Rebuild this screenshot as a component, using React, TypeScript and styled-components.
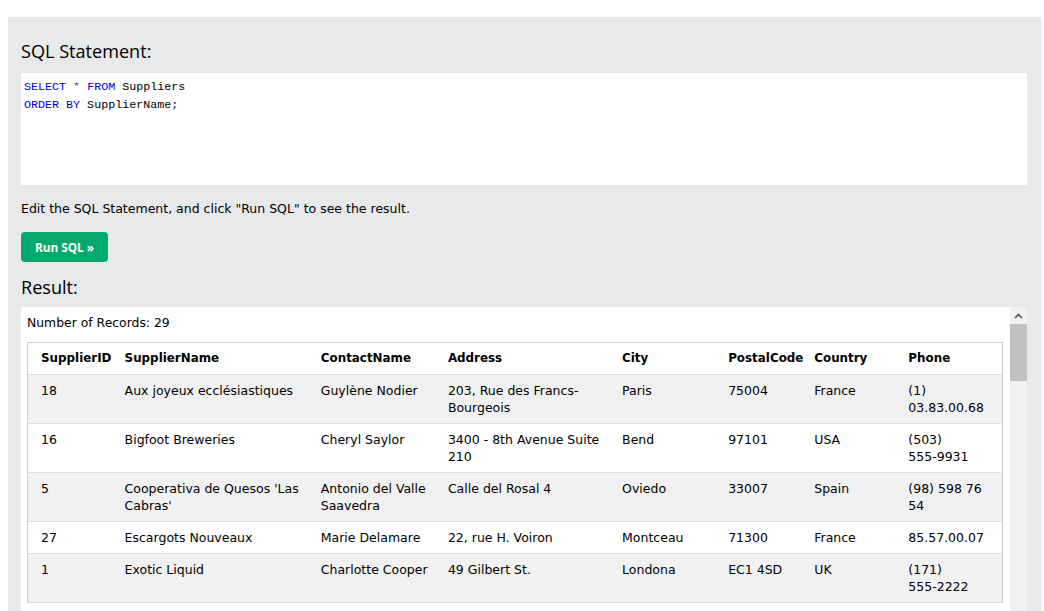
import styled, { createGlobalStyle } from "styled-components";

type Supplier = {
  id: string;
  name: string;
  contact: string;
  address: string;
  city: string;
  postal: string;
  country: string;
  phone: string;
};

const suppliers: Supplier[] = [
  { id: "18", name: "Aux joyeux ecclésiastiques", contact: "Guylène Nodier", address: "203, Rue des Francs-Bourgeois", city: "Paris", postal: "75004", country: "France", phone: "(1) 03.83.00.68" },
  { id: "16", name: "Bigfoot Breweries", contact: "Cheryl Saylor", address: "3400 - 8th Avenue Suite 210", city: "Bend", postal: "97101", country: "USA", phone: "(503) 555-9931" },
  { id: "5", name: "Cooperativa de Quesos 'Las Cabras'", contact: "Antonio del Valle Saavedra", address: "Calle del Rosal 4", city: "Oviedo", postal: "33007", country: "Spain", phone: "(98) 598 76 54" },
  { id: "27", name: "Escargots Nouveaux", contact: "Marie Delamare", address: "22, rue H. Voiron", city: "Montceau", postal: "71300", country: "France", phone: "85.57.00.07" },
  { id: "1", name: "Exotic Liquid", contact: "Charlotte Cooper", address: "49 Gilbert St.", city: "Londona", postal: "EC1 4SD", country: "UK", phone: "(171) 555-2222" },
];

const columns = [
  { title: "SupplierID", width: 91 },
  { title: "SupplierName", width: 196 },
  { title: "ContactName", width: 127 },
  { title: "Address", width: 174 },
  { title: "City", width: 106 },
  { title: "PostalCode", width: 86 },
  { title: "Country", width: 94 },
  { title: "Phone", width: 100 },
];

// phone numbers break only at spaces, never at the hyphen
function Phone({ value }: { value: string }) {
  const words = value.split(" ");
  return (
    <>
      {words.map((w, i) => (
        <span key={i}>
          <Word>{w}</Word>
          {i < words.length - 1 ? " " : ""}
        </span>
      ))}
    </>
  );
}

function App() {
  return (
    <>
      <GlobalStyle />
      <Panel>
        <Heading>SQL Statement:</Heading>
        <CodeBox>
          <CodeLine>
            <Keyword>SELECT</Keyword> <Operator>*</Operator> <Keyword>FROM</Keyword> Suppliers
          </CodeLine>
          <CodeLine>
            <Keyword>ORDER BY</Keyword> SupplierName;
          </CodeLine>
        </CodeBox>
        <Hint>Edit the SQL Statement, and click "Run SQL" to see the result.</Hint>
        <RunButton>Run SQL »</RunButton>
        <ResultHeading>Result:</ResultHeading>
        <ResultFrame>
          <ResultBody>
            <Count>Number of Records: 29</Count>
            <Table>
              <colgroup>
                {columns.map((c) => (
                  <Col key={c.title} $width={c.width} />
                ))}
              </colgroup>
              <thead>
                <Row>
                  {columns.map((c) => (
                    <Th key={c.title}>{c.title}</Th>
                  ))}
                </Row>
              </thead>
              <tbody>
                {suppliers.map((s) => (
                  <Row key={s.id}>
                    <Td>{s.id}</Td>
                    <Td>{s.name}</Td>
                    <Td>{s.contact}</Td>
                    <Td>{s.address}</Td>
                    <Td>{s.city}</Td>
                    <Td>{s.postal}</Td>
                    <Td>{s.country}</Td>
                    <Td>
                      <Phone value={s.phone} />
                    </Td>
                  </Row>
                ))}
              </tbody>
            </Table>
          </ResultBody>
          <Scrollbar>
            <ScrollArrow>
              <svg width="9" height="6" viewBox="0 0 9 6">
                <path d="M1 5 L4.5 1.5 L8 5" fill="none" stroke="#505050" strokeWidth="1.6" />
              </svg>
            </ScrollArrow>
            <ScrollThumb />
          </Scrollbar>
        </ResultFrame>
      </Panel>
    </>
  );
}

export default App;

const GlobalStyle = createGlobalStyle`
  html, body {
    margin: 0;
    padding: 0;
    background: #ffffff;
    height: 611px;
    overflow: hidden;
  }
  body {
    font-family: "DejaVu Sans", Verdana, sans-serif;
  }
`;

const Panel = styled.div`
  margin: 17px 3px 0 8px;
  padding: 20px 14px 0 13px;
  height: 594px;
  box-sizing: border-box;
  background-color: #e7e9eb;
  box-shadow: 1px 0 1px rgba(0, 0, 0, 0.06);
  display: flex;
  flex-direction: column;
  align-items: flex-start;
  overflow: hidden;
`;

const Heading = styled.h2`
  margin: 0 0 8px;
  font-family: "Open Sans", "Segoe UI", sans-serif;
  font-size: 18.1px;
  font-weight: 400;
  line-height: 28px;
  color: #000;
`;

const CodeBox = styled.div`
  align-self: stretch;
  height: 112px;
  box-sizing: border-box;
  padding: 5px 3px;
  background: #ffffff;
  font-family: "Liberation Mono", "DejaVu Sans Mono", monospace;
  font-size: 11.7px;
  line-height: 18px;
  color: #000;
`;

const CodeLine = styled.div`
  white-space: pre;
`;

const Keyword = styled.span`
  color: #0000cd;
`;

const Operator = styled.span`
  color: #555577;
`;

const Hint = styled.p`
  margin: 15px 0 0;
  font-size: 12.5px;
  line-height: 18px;
  color: #000;
`;

const RunButton = styled.button`
  margin-top: 14px;
  width: 87px;
  height: 30px;
  border: none;
  border-radius: 4px;
  background-color: #04aa6d;
  color: #ffffff;
  font-family: "Open Sans", "Segoe UI", sans-serif;
  font-size: 11.8px;
  font-weight: 700;
  padding: 0;
  cursor: pointer;
`;

const ResultHeading = styled.h2`
  margin: 11px 0 0;
  font-family: "Open Sans", "Segoe UI", sans-serif;
  font-size: 18.1px;
  font-weight: 400;
  line-height: 28px;
  color: #000;
`;

const ResultFrame = styled.div`
  margin-top: 6px;
  align-self: stretch;
  flex: 1;
  background: #ffffff;
  display: flex;
  overflow: hidden;
`;

const ResultBody = styled.div`
  flex: 1;
  padding: 7px 8px 0 6px;
  min-width: 0;
`;

const Count = styled.div`
  font-size: 12.4px;
  line-height: 18px;
  margin-bottom: 10px;
  color: #000;
`;

const Table = styled.table`
  border-collapse: collapse;
  table-layout: fixed;
  width: 976px;
  border: 1px solid #cccccc;
  font-size: 12.5px;
  line-height: 17px;
  color: #000;
`;

const Col = styled.col<{ $width: number }>`
  width: ${(p) => p.$width}px;
`;

const Row = styled.tr`
  border-bottom: 1px solid #dddddd;
  background-color: #ffffff;
  tbody &:nth-child(odd) {
    background-color: #f1f1f1;
  }
`;

const Th = styled.th`
  text-align: left;
  font-size: 11.9px;
  font-weight: 700;
  padding: 7px 6px;
  vertical-align: top;
  white-space: nowrap;
  &:first-child {
    padding-left: 13px;
  }
`;

const Td = styled.td`
  padding: 7px 6px;
  vertical-align: top;
  &:first-child {
    padding-left: 13px;
  }
`;

const Word = styled.span`
  white-space: nowrap;
`;

const Scrollbar = styled.div`
  width: 17px;
  background: #f1f1f1;
  display: flex;
  flex-direction: column;
`;

const ScrollArrow = styled.div`
  height: 17px;
  display: flex;
  align-items: center;
  justify-content: center;
`;

const ScrollThumb = styled.div`
  height: 57px;
  background: #c1c1c1;
`;
